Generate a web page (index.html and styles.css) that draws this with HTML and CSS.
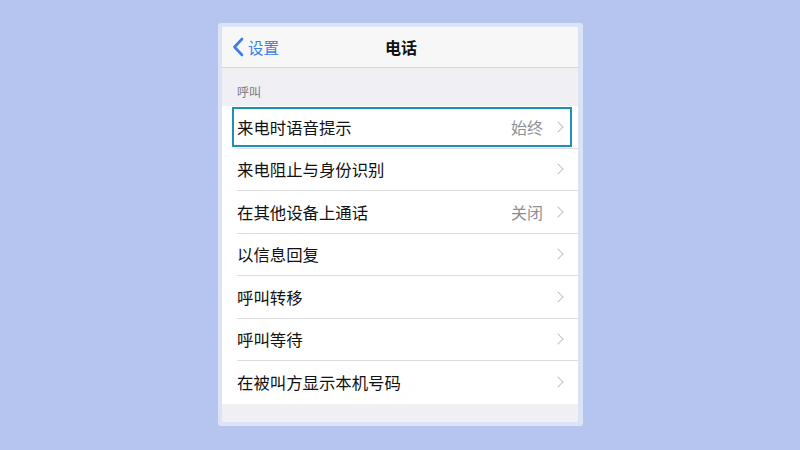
FILE: index.html
```html
<!DOCTYPE html>
<html lang="zh">
<head>
<meta charset="utf-8">
<link rel="stylesheet" href="styles.css">
</head>
<body>
<div class="frame">
  <div class="screen">
    <div class="navbar">
      <div class="back">
        <svg class="back-icon" width="12" height="20" viewBox="0 0 12 20"><path d="M10 2 L2.5 10 L10 18" fill="none" stroke="#3a7ee6" stroke-width="2.6" stroke-linecap="round" stroke-linejoin="round"/></svg>
        <span>设置</span>
      </div>
      <div class="title">电话</div>
    </div>
    <div class="group-header">呼叫</div>
    <div class="list">
      <div class="row focused"><span class="label">来电时语音提示</span><span class="value">始终</span><span class="chev"></span></div>
      <div class="row"><span class="label">来电阻止与身份识别</span><span class="value"></span><span class="chev"></span></div>
      <div class="row"><span class="label">在其他设备上通话</span><span class="value">关闭</span><span class="chev"></span></div>
      <div class="row"><span class="label">以信息回复</span><span class="value"></span><span class="chev"></span></div>
      <div class="row"><span class="label">呼叫转移</span><span class="value"></span><span class="chev"></span></div>
      <div class="row"><span class="label">呼叫等待</span><span class="value"></span><span class="chev"></span></div>
      <div class="row last"><span class="label">在被叫方显示本机号码</span><span class="value"></span><span class="chev"></span></div>
    </div>
    <div class="footer"></div>
  </div>
</div>
</body>
</html>
```
FILE: styles.css
```css
html, body {
  margin: 0;
  padding: 0;
}
body {
  width: 800px;
  height: 450px;
  background: #b5c5ef;
  display: flex;
  justify-content: center;
  align-items: flex-start;
  font-family: "Noto Sans CJK SC", "Noto Sans", sans-serif;
  overflow: hidden;
}
.frame {
  margin-top: 23px;
  margin-left: 1px;
  padding: 4px 5px 4px 4px;
  background: #dce3f6;
  border-radius: 3px;
}
.screen {
  width: 356px;
  background: #efeff4;
  display: flex;
  flex-direction: column;
}
.navbar {
  height: 40px;
  background: #f7f7f8;
  border-bottom: 1px solid #d6d6da;
  position: relative;
  display: flex;
  align-items: center;
  justify-content: center;
}
.back {
  position: absolute;
  left: 10px;
  top: 0;
  height: 40px;
  display: flex;
  align-items: center;
  gap: 4px;
  color: #3a7ee6;
  font-size: 15.5px;
}
.back-icon {
  display: block;
}
.title {
  font-size: 16px;
  font-weight: 700;
  color: #111;
  margin-left: 2px;
}
.group-header {
  height: 38px;
  box-sizing: border-box;
  padding: 15px 0 0 15px;
  font-size: 12px;
  color: #7a7a80;
  line-height: 18px;
}
.list {
  background: #fff;
  display: flex;
  flex-direction: column;
}
.row {
  height: 42.5px;
  box-sizing: border-box;
  display: flex;
  align-items: center;
  margin-left: 15px;
  padding-right: 14px;
  border-bottom: 1px solid #dcdce0;
  position: relative;
  font-size: 16.4px;
  color: #111;
}
.row.last {
  border-bottom: none;
}
.row.focused::after {
  content: "";
  position: absolute;
  left: -5px;
  right: 6px;
  top: 1px;
  bottom: 1px;
  border: 2.5px solid #1d90b6;
  pointer-events: none;
}
.label {
  flex: 1;
}
.value {
  color: #8e8e93;
  font-size: 16px;
  margin-right: 11px;
}
.chev {
  width: 7px;
  height: 7px;
  border-top: 1.6px solid #c4c4c8;
  border-right: 1.6px solid #c4c4c8;
  transform: rotate(45deg);
  margin-right: 2px;
}
.footer {
  height: 18px;
}
```
